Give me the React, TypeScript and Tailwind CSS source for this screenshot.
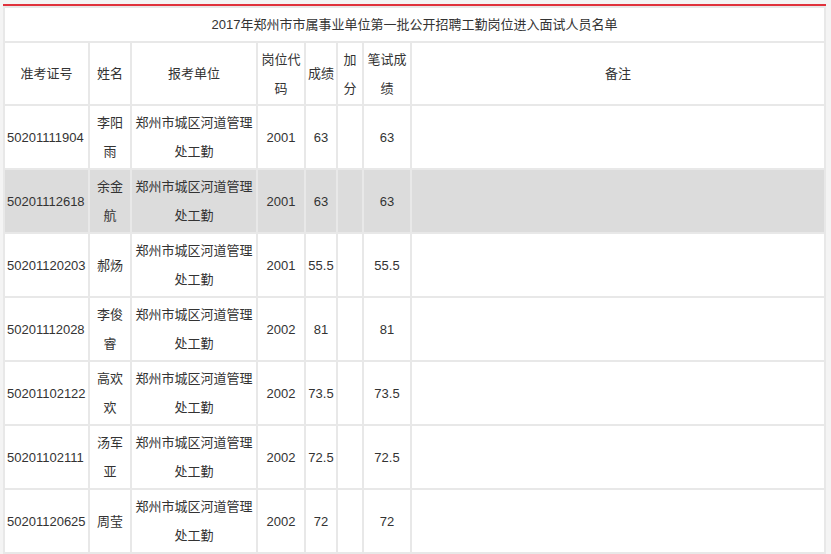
const rows = [
  ["50201111904", "李阳雨", "2001", "63", "63", false],
  ["50201112618", "余金航", "2001", "63", "63", true],
  ["50201120203", "郝炀", "2001", "55.5", "55.5", false],
  ["50201112028", "李俊睿", "2002", "81", "81", false],
  ["50201102122", "高欢欢", "2002", "73.5", "73.5", false],
  ["50201102111", "汤军亚", "2002", "72.5", "72.5", false],
  ["50201120625", "周莹", "2002", "72", "72", false],
] as const;

const td = "border-2 border-[#e8e8e8] text-center align-middle";

export default function App() {
  return (
    <div className="w-[831px] h-[554px] bg-[#f4f4f4] pt-[4px] pl-[3px] overflow-hidden text-[13px] leading-[29px] text-[#333]" style={{ fontFamily: '"Liberation Sans", "Noto Sans CJK SC", sans-serif' }}>
      <div className="w-[823px] bg-white border-t-2 border-[#e0323c]">
        <table className="w-full border-collapse table-fixed">
          <colgroup>
            <col className="w-[85px]" />
            <col className="w-[42px]" />
            <col className="w-[126px]" />
            <col className="w-[48px]" />
            <col className="w-[32px]" />
            <col className="w-[26px]" />
            <col className="w-[48px]" />
            <col />
          </colgroup>
          <tbody>
            <tr className="h-[35px]">
              <td colSpan={8} className={td}>2017年郑州市市属事业单位第一批公开招聘工勤岗位进入面试人员名单</td>
            </tr>
            <tr className="h-[63px]">
              <td className={td}>准考证号</td>
              <td className={td}>姓名</td>
              <td className={td}>报考单位</td>
              <td className={td}>岗位代码</td>
              <td className={td}>成绩</td>
              <td className={td}>加分</td>
              <td className={td}>笔试成绩</td>
              <td className={td}>备注</td>
            </tr>
            {rows.map(([id, name, code, score, written, hl]) => (
              <tr key={id} className={`h-[64px] ${hl ? "bg-[#dcdcdc]" : ""}`}>
                <td className={`${td} !text-left pl-[2px]`}>{id}</td>
                <td className={`${td} px-[4px]`}>{name}</td>
                <td className={td}>郑州市城区河道管理处工勤</td>
                <td className={td}>{code}</td>
                <td className={td}>{score}</td>
                <td className={td}></td>
                <td className={td}>{written}</td>
                <td className={td}></td>
              </tr>
            ))}
          </tbody>
        </table>
      </div>
    </div>
  );
}
